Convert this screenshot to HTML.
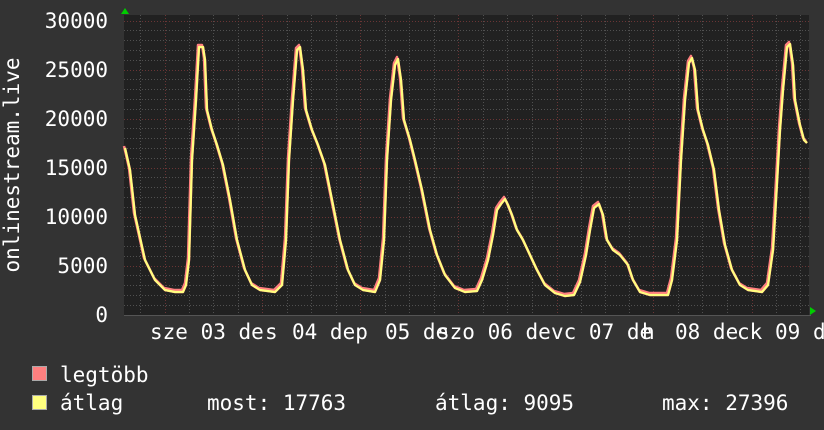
<!DOCTYPE html>
<html><head><meta charset="utf-8"><style>
html,body{margin:0;padding:0;background:#333;width:824px;height:430px;overflow:hidden}
svg{display:block}
text{font-family:"DejaVu Sans Mono","Liberation Mono",monospace;font-size:21px;fill:#fff}
</style></head><body>
<svg width="824" height="430" viewBox="0 0 824 430">
<rect width="824" height="430" fill="#333"/>
<rect x="124" y="15" width="685" height="300" fill="#212121"/>
<g stroke="#505050" stroke-width="1" stroke-dasharray="1,2">
<path d="M124 305.5H809M124 295.5H809M124 285.5H809M124 275.5H809M124 256.5H809M124 246.5H809M124 236.5H809M124 226.5H809M124 207.5H809M124 197.5H809M124 187.5H809M124 177.5H809M124 158.5H809M124 148.5H809M124 138.5H809M124 128.5H809M124 109.5H809M124 99.5H809M124 89.5H809M124 79.5H809M124 60.5H809M124 50.5H809M124 40.5H809M124 30.5H809"/>
<path d="M140.5 15V315M189.5 15V315M213.5 15V315M238.5 15V315M287.5 15V315M311.5 15V315M336.5 15V315M385.5 15V315M409.5 15V315M434.5 15V315M483.5 15V315M507.5 15V315M532.5 15V315M581.5 15V315M605.5 15V315M629.5 15V315M678.5 15V315M702.5 15V315M727.5 15V315M776.5 15V315M800.5 15V315"/>
</g>
<g stroke="#6a3535" stroke-width="1" stroke-dasharray="1,2">
<path d="M124 266.5H809M124 217.5H809M124 168.5H809M124 119.5H809M124 70.5H809M124 21.5H809"/>
<path d="M165.5 15V315M262.5 15V315M360.5 15V315M458.5 15V315M557.5 15V315M653.5 15V315M752.5 15V315"/>
</g>
<path d="M124 315.5H811" stroke="#555" stroke-width="1"/>
<polygon points="121,14 129,14 125,8" fill="#0c0"/>
<polygon points="810,307 810,315 816,311" fill="#0c0"/>
<g fill="none" stroke-linejoin="round">
<polyline id="c" stroke="#ff7f7f" stroke-width="2.5" transform="translate(-1,-2)" points="125,148 130,170 135,215 145,260 155,280 165,290 175,292 183,292 186,285 189,260 192,160 196,100 199,47 203,47 205,60 207,110 212,130 217,145 223,165 230,200 237,240 245,270 252,285 260,290 275,292 282,285 286,240 289,160 293,100 297,50 300,47 303,70 306,110 312,130 318,145 325,165 332,200 340,240 348,270 355,285 363,290 375,292 380,280 384,240 387,160 391,100 395,65 398,59 401,80 404,120 410,140 415,160 422,190 430,230 437,255 445,275 455,288 465,292 477,291 482,280 488,260 493,235 497,210 501,204 505,199 508,205 512,215 517,230 523,240 530,255 537,270 545,285 555,293 565,296 574,295 580,282 586,255 590,230 594,208 599,204 603,215 607,240 613,250 620,255 628,265 633,280 640,292 650,295 668,295 672,280 677,240 681,160 685,100 689,63 692,58 695,70 698,110 703,130 708,145 714,170 719,210 725,245 732,270 740,285 748,290 762,292 768,285 773,250 776,200 780,130 783,90 787,47 790,44 793,65 795,100 798,115 800,125 804,140 807,143"/>
<use href="#c" transform="translate(1,2)" stroke="#ffff7f" stroke-width="2.2"/>
</g>
<polyline fill="none" stroke="#ffff7f" stroke-width="2.2" stroke-linejoin="round" points="125,148 130,170 135,215 145,260 155,280 165,290 175,292 183,292 186,285 189,260 192,160 196,100 199,47 203,47 205,60 207,110 212,130 217,145 223,165 230,200 237,240 245,270 252,285 260,290 275,292 282,285 286,240 289,160 293,100 297,50 300,47 303,70 306,110 312,130 318,145 325,165 332,200 340,240 348,270 355,285 363,290 375,292 380,280 384,240 387,160 391,100 395,65 398,59 401,80 404,120 410,140 415,160 422,190 430,230 437,255 445,275 455,288 465,292 477,291 482,280 488,260 493,235 497,210 501,204 505,199 508,205 512,215 517,230 523,240 530,255 537,270 545,285 555,293 565,296 574,295 580,282 586,255 590,230 594,208 599,204 603,215 607,240 613,250 620,255 628,265 633,280 640,292 650,295 668,295 672,280 677,240 681,160 685,100 689,63 692,58 695,70 698,110 703,130 708,145 714,170 719,210 725,245 732,270 740,285 748,290 762,292 768,285 773,250 776,200 780,130 783,90 787,47 790,44 793,65 795,100 798,115 800,125 804,140 807,143"/>
<g text-anchor="end">
<text x="108" y="28">30000</text>
<text x="108" y="77">25000</text>
<text x="108" y="126">20000</text>
<text x="108" y="175">15000</text>
<text x="108" y="224">10000</text>
<text x="108" y="273">5000</text>
<text x="108" y="322">0</text>
</g>
<text transform="translate(19,165) rotate(-90)" text-anchor="middle">onlinestream.live</text>
<g>
<text x="150" y="339">sze 03 de</text><text x="265" y="339">s</text>
<text x="292" y="339">04 dep</text>
<text x="385" y="339">05 de</text><text x="437" y="339">szo 06 de</text>
<text x="551" y="339">vc 07 de</text><text x="642" y="339">h</text><text x="675" y="339">08 de</text><text x="737" y="339">ck</text><text x="775" y="339">09</text><text x="813" y="339">d</text>
</g>
<rect x="32.5" y="366.5" width="14" height="14" fill="#ff7f7f" stroke="#aaa"/>
<rect x="32.5" y="395.5" width="14" height="14" fill="#ffff7f" stroke="#aaa"/>
<text x="60" y="382">legtöbb</text>
<text x="60" y="410">átlag</text>
<text x="207" y="410">most: 17763</text>
<text x="435" y="410">átlag: 9095</text>
<text x="662" y="410">max: 27396</text>
</svg>
</body></html>
